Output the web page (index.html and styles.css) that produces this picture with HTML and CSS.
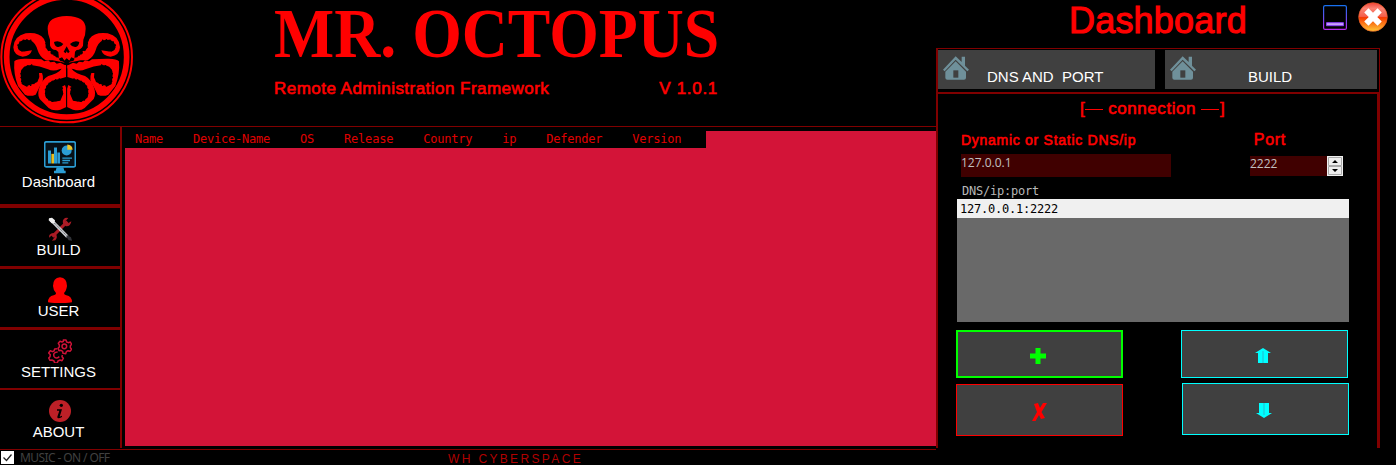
FILE: index.html
```html
<!DOCTYPE html>
<html lang="en">
<head>
<meta charset="utf-8">
<title>MR. OCTOPUS</title>
<link rel="stylesheet" href="styles.css">
</head>
<body>
<div class="app">
  <div class="main">
    <header class="header">
      <svg class="logo" viewBox="0 0 420 378">
        <g fill="none" stroke="#f00"><circle cx="200" cy="171" r="196" stroke-width="6"/><circle cx="200" cy="171" r="180" stroke-width="17"/></g>
        <defs>
          <g id="arms">
            <path fill="#f00" d="M184 186L158 181L137 181Q119 171 113 151Q107 129 92 121L72 119Q53 125 53 142Q57 158 77 154L96 151Q91 168 68 170Q41 166 40 142Q42 108 77 100Q116 95 132 117Q138 126 137 142L143 151L152 154L154 163L163 165L168 172L179 174L194 188Z"/>
            <path fill="#f00" d="M43 184Q50 175 79 176L124 178L133 184L145 181L151 187L163 185L170 191L181 188L200 198V205L180 207Q160 216 144 208Q119 197 93 195Q61 197 62 224L65 252L77 259L97 253L112 246L118 231L117 219L126 219Q135 240 119 260L107 284Q90 291 75 284L54 258Q40 222 43 184Z"/>
            <path fill="#f00" d="M198 195V231L178 237Q145 241 137 265Q130 292 146 300L157 306L181 302L190 281L186 260L195 255L199 266V321L181 329Q158 334 146 324L119 297Q110 282 120 257Q131 229 157 224Q182 219 190 196Z"/>
            <g fill="none" stroke="#000" stroke-linecap="round" stroke-width="5" stroke-dasharray=".1 11">
              <path d="M92 121Q65 115 54 134Q54 152 75 154M137 120L140 145L153 158L167 168"/>
              <path d="M95 195Q64 199 63 225Q62 254 82 258Q107 254 116 229"/>
              <path d="M178 237Q139 245 136 273Q138 303 160 304Q187 299 187 263"/>
            </g>
          </g>
        </defs>
        <use href="#arms"/><use href="#arms" transform="matrix(-1 0 0 1 400 0)"/>
        <path fill="#f00" d="M143 86Q143 49 200 48Q257 49 257 86Q257 104 250 119L249 137Q244 149 230 150L225 155L223 177L214 173L208 183L201 176L193 183L187 173L177 177L175 156L168 150Q153 150 150 136L150 119Q143 103 143 86Z"/>
        <path d="M162 126Q177 119 190 132Q184 142 173 141Q164 139 162 126ZM238 126Q223 119 210 132Q216 142 227 141Q236 139 238 126ZM200 139L191 155L197 160L200 154L204 160L209 155ZM176 176L186 172L193 182L200 175L208 182L214 172L224 176L220 183L200 187L181 183Z"/>
        <path d="M200 188V325" stroke="#000" stroke-width="3"/>
      </svg>
      <div class="brand">
        <h1>MR. OCTOPUS</h1>
        <div class="sub"><span>Remote Administration Framework</span><span class="ver">V 1.0.1</span></div>
      </div>
    </header>
    <div class="body">
      <nav class="side">
        <div class="item dash">
          <svg width="32" height="33" viewBox="0 0 96 98"><rect x="2" y="2" width="92" height="75" rx="5" fill="#071017" stroke="#2b9dd4" stroke-width="5"/><path fill="#2b9dd4" d="M12 28h9v39h-9zM30 19h9v48h-9zM40 34h8v33h-8zM38 78h20l3 11h4v7H30v-7h5z"/><path fill="#e7bd22" d="M22 38h8v29h-8z"/><circle cx="68" cy="28" r="15" fill="#2b9dd4"/><path fill="#f0c929" d="M70 26V10q15 1 16 16z"/><path d="M55 51h29M55 58h23M55 65h18" stroke="#2b9dd4" stroke-width="4"/></svg>
          <span>Dashboard</span>
        </div>
        <div class="item build">
          <svg width="24" height="24" viewBox="0 0 72 72"><path d="M13 59L58 14" stroke="#ac1b25" stroke-width="9"/><path d="M51 3Q41 9 46 22L54 28Q68 29 70 13L60 19L52 13L61 3Q56 1 51 3ZM4 54Q14 43 24 51Q30 61 22 70L12 71L20 60L13 54L3 62Z" fill="#ac1b25"/><path d="M8 8L58 59" stroke="#c9cbd0" stroke-width="9"/><path d="M19 18L58 58" stroke="#333" stroke-width="2" stroke-dasharray="4 2"/><path d="M3 4l9-2 9 8-2 8-8 1-9-9z" fill="#eee"/><path d="M58 55l11 6 3 10-10-1-7-11z" fill="#303238"/></svg>
          <span>BUILD</span>
        </div>
        <div class="item user">
          <svg width="26" height="26" viewBox="0 0 78 78"><path fill="#f00" d="M39 1Q60 3 60 27Q58 42 51 48Q51 53 58 55Q75 58 75 76Q39 81 3 76Q3 58 20 55Q28 53 27 48Q19 41 18 27Q18 3 39 1Z"/></svg>
          <span>USER</span>
        </div>
        <div class="item set">
          <svg width="24" height="24" viewBox="0 0 72 72" fill="none" stroke="#cf1238" stroke-width="4.500" stroke-linejoin="round"><path d="M46 3h8l2 6 5 2 6-2 4 7-4 4v6l4 5-5 6-6-2-5 3-2 6-8-1-1-6-5-3-6 1-3-7 4-4v-6l-3-5 5-6 6 2 4-2z"/><circle cx="49" cy="22" r="7"/><path d="M27 29l-7 1-2 6-5 2-6-3-5 7 5 5-1 6-4 4 4 7 6-1 6 3 2 6 8-1 2-5 6-3 6 2 4-7-4-5 1-5M29 39q-15 1-11 13 6 10 16 1"/></svg>
          <span>SETTINGS</span>
        </div>
        <div class="item about">
          <svg width="22" height="22" viewBox="0 0 66 66"><circle cx="33" cy="33" r="33" fill="#bd2027"/><circle cx="37" cy="16" r="5"/><path d="M24 28h15l-7 22 7-3v4q-15 8-14-1l6-18h-7z"/></svg>
          <span>ABOUT</span>
        </div>
      </nav>
      <section class="table">
        <div class="thead"><span>Name</span><span>Device-Name</span><span>OS</span><span>Release</span><span>Country</span><span>ip</span><span>Defender</span><span>Version</span></div>
      </section>
    </div>
    <footer class="footer">
      <svg width="13" height="13" viewBox="0 0 13 13"><path fill="#fff" d="M0 0h13v13H0z"/><path d="M2.5 6.5l3 3 5-6" fill="none" stroke="#222" stroke-width="1.3"/></svg>
      <span class="music">MUSIC - ON / OFF</span><span class="credit">WH CYBERSPACE</span>
    </footer>
  </div>
  <aside class="right">
    <div class="top">
      <h2>Dashboard</h2>
      <svg class="min" width="24" height="25" viewBox="0 0 24 25"><defs><linearGradient id="mg" x2="0" y2="1"><stop stop-color="#1770ef"/><stop offset="1" stop-color="#b82cf0"/></linearGradient></defs><rect x=".6" y=".6" width="22.8" height="23.8" rx="1.5" fill="none" stroke="url(#mg)" stroke-width="1.2"/><path fill="#c9a3fa" stroke="#8a3cf5" d="M3.5 17.7h17v3h-17z"/></svg>
      <svg class="close" width="30" height="30" viewBox="0 0 90 90"><defs><linearGradient id="cg" x2="0" y2="1"><stop stop-color="#ee4035"/><stop offset=".2" stop-color="#fa8373"/><stop offset=".48" stop-color="#f4604b"/><stop offset=".52" stop-color="#f63a00"/><stop offset="1" stop-color="#ffc936"/></linearGradient></defs><circle cx="45" cy="45" r="43" fill="url(#cg)" stroke="#e65a25" stroke-width="2"/><path d="M25 25L65 65M65 25L25 65" stroke="#fff" stroke-width="18"/></svg>
    </div>
    <div class="tabs">
      <div class="tab t1"><svg width="26" height="24" viewBox="0 0 78 72"><path fill="#6f909a" d="M38 1L56 18V2h10v27l12 12-5 5L38 11 5 46l-5-5zM38 16l31 31v18q0 6-6 6H13q-6 0-6-6V47z"/><path fill="#404040" d="M31 43h15v22H31z"/></svg><span>DNS AND&nbsp; PORT</span></div>
      <div class="tab t2"><svg width="26" height="24" viewBox="0 0 78 72"><path fill="#6f909a" d="M38 1L56 18V2h10v27l12 12-5 5L38 11 5 46l-5-5zM38 16l31 31v18q0 6-6 6H13q-6 0-6-6V47z"/><path fill="#404040" d="M31 43h15v22H31z"/></svg><span>BUILD</span></div>
    </div>
    <div class="panel">
      <div class="conn"><span>[</span><i></i><span>connection</span><i></i><span>]</span></div>
      <div class="labels"><span>Dynamic or Static DNS/ip</span><span class="portlabel">Port</span></div>
      <div class="fields"><div class="host">127.0.0.1</div><div class="port"><span>2222</span><svg width="16" height="20" viewBox="0 0 16 20"><path fill="#f0f0f0" d="M0 0h16v20H0z"/><path fill="#eee" stroke="#aaa" d="M1.5 1.5h13v8h-13zM1.5 10.5h13v8h-13z"/><path d="M5 7l3-3 3 3zM5 13h6l-3 3z"/></svg></div></div>
      <div class="mono listlabel">DNS/ip:port</div>
      <div class="list mono"><div>127.0.0.1:2222</div></div>
      <div class="actions">
        <div class="btn add"><svg width="18" height="18" viewBox="0 0 18 18"><path fill="#0f0" d="M6.500 1h5v5.500H17v5h-5.500V17h-5v-5.500H1v-5h5.500z"/></svg></div>
        <div class="btn up"><svg width="16" height="17" viewBox="0 0 16 17"><path fill="#0ff" d="M8 1l8 5h-3v10H3V6H0z"/><path d="M8 4v12" stroke="#24b9cf"/></svg></div>
        <div class="btn del"><svg width="15" height="20" viewBox="0 0 15 20"><path fill="#f00" d="M2 2l4-1 2 5 3-5h4L9.500 10l3.500 6-4 1-2-4-3.500 6H0l5-9z"/></svg></div>
        <div class="btn down"><svg width="16" height="17" viewBox="0 0 16 17"><path fill="#0ff" d="M8 16l8-5h-3V1H3v10H0z"/><path d="M8 1v12" stroke="#24b9cf"/></svg></div>
      </div>
    </div>
  </aside>
</div>
</body>
</html>
```
FILE: styles.css
```css
* { box-sizing: border-box; }
body { margin: 0; background: #000; font: 15px/18px "Liberation Sans", Arial, sans-serif; color: #fff; }
svg { display: block; flex: none; }
.app { display: grid; grid-template-columns: 936px 460px; width: 1396px; height: 465px; overflow: hidden; }
.main { display: grid; grid-template-rows: 126px 323px 16px; }
.header { display: flex; color: #f00; }
.logo { width: 140px; height: 126px; }
.brand { width: 700px; padding-left: 134px; }
h1 { margin: 0; width: 520px; height: 76px; font: bold 70px/68px "Liberation Serif", serif; white-space: nowrap; transform: scaleX(.911); transform-origin: left; }
.sub { display: flex; justify-content: space-between; width: 444px; padding-top: 4px; font-size: 17px; letter-spacing: .47px; white-space: nowrap; -webkit-text-stroke: .6px #f00; }
.ver { letter-spacing: .7px; }
.body { display: grid; grid-template-columns: 122px 814px; border-top: 1px solid #800000; }
.side { height: 321px; border-right: 2px solid #800000; }
.item { display: flex; flex-direction: column; align-items: center; border-bottom: 3px solid #800000; padding-right: 3px; }
.item svg { margin-left: 3px; }
.dash { height: 81px; border-bottom-width: 4px; padding-top: 14px; }
.dash span { margin-top: -1px; }
.build { height: 61px; padding-top: 9px; }
.user { height: 61px; padding-top: 8px; }
.user span { margin-top: -1px; }
.set { height: 60px; border-bottom-width: 2px; padding-top: 9px; }
.about { border: 0; padding-top: 10px; }
.about span { margin-top: 1px; }
.table { margin: 4px 0 0 3px; height: 315px; background: #d31438; }
.thead { display: flex; gap: 30px; width: 581px; height: 17px; padding-left: 10px; background: #000; color: #e00000; font: 12px/17px "DejaVu Sans Mono", monospace; letter-spacing: -.22px; }
.footer { display: flex; border-top: 1px solid #800000; line-height: 16px; }
.footer svg { margin: 1px 0 0 1px; }
.music { margin-left: 6px; width: 428px; color: #404040; font-family: "Noto Sans", sans-serif; font-size: 12px; letter-spacing: -.6px; }
.credit { color: #b00000; font-size: 12px; line-height: 18px; letter-spacing: 2.35px; white-space: nowrap; }
.right { display: grid; grid-template-rows: 48px 44px 356px; align-content: start; }
.top { display: flex; }
h2 { margin: 0 0 0 133px; width: 254px; color: #f00; font-size: 36px; line-height: 42px; font-weight: normal; letter-spacing: .2px; -webkit-text-stroke: 1.1px #f00; }
.min { margin-top: 5px; }
.close { margin: 2px 0 0 11px; }
.tabs { width: 444px; display: flex; gap: 10px; border: 1px solid #800000; border-bottom: 0; border-left-width: 2px; padding: 1px 0 3px; }
.tab { display: flex; height: 39px; padding: 6px 0 0 5px; background: #404040; }
.tab span { margin-top: 12px; }
.t1 { width: 217px; }
.t1 span { margin-left: 18px; }
.t2 { width: 212px; }
.t2 span { margin-left: 52px; }
.panel { width: 444px; border: solid #800000; border-width: 2px 3px 0 2px; }
.conn { display: flex; align-items: center; height: 30px; padding-left: 142px; color: #f00; font-size: 17px; letter-spacing: .55px; -webkit-text-stroke: .6px #f00; }
.conn i { width: 18px; height: 1px; background: #f00; margin: 1px 5px 0 0; }
.conn span:nth-child(3) + i { margin: 1px 1px 0 5px; }
.labels { display: flex; height: 30px; padding: 6px 0 0 23px; color: #f00; font-size: 14px; line-height: 20px; letter-spacing: .72px; -webkit-text-stroke: .6px #f00; }
.portlabel { margin-left: auto; margin-right: 91px; font-size: 16px; }
.fields { display: flex; height: 24px; padding-left: 23px; color: #c0c0c0; font: 12px/18px "Open Sans", sans-serif; }
.host { width: 210px; height: 23px; background: #400000; }
.port { display: flex; width: 93px; height: 20px; margin: 2px 0 0 79px; background: #400000; line-height: 16px; }
.port svg { margin-left: auto; }
.mono { font: 12px/18px "DejaVu Sans Mono", monospace; letter-spacing: -.22px; }
.listlabel { height: 21px; padding: 4px 0 0 24px; color: #b8b8b8; }
.list { width: 392px; height: 123px; margin-left: 19px; background: #696969; color: #000; }
.list div { height: 19px; padding: 1px 0 0 3px; background: #f0f0f0; }
.actions { display: grid; grid-template-columns: 167px 168px; column-gap: 58px; padding: 8px 0 0 18px; }
.btn { display: flex; align-items: center; justify-content: center; height: 48px; width: 167px; background: #404040; border: 1px solid #0ff; }
.add { border: 2px solid #0f0; }
.add svg { margin: 3px 3px 0 0; }
.up svg { margin: 3px 3px 0 0; }
.del { height: 52px; margin-top: 6px; border-color: #f00; }
.del svg { margin: 4px 1px 0 0; }
.down { height: 52px; margin: 5px 0 0 1px; }
.down svg { margin: 3px 3px 0 0; }
```
